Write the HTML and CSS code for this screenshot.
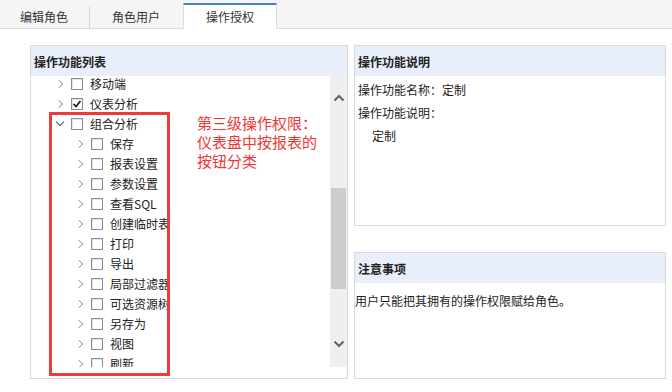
FILE: index.html
```html
<!DOCTYPE html>
<html lang="zh-CN">
  <head>
    <meta charset="UTF-8" />
    <title>操作授权</title>
    <link rel="stylesheet" href="styles.css">
  </head>
  <body>
    <div class="tabs">
      <div class="tab">编辑角色</div>
      <div class="tab">角色用户</div>
      <div class="tab active">操作授权</div>
    </div>

    <div class="main">
      <div class="panel func-panel">
        <div class="panel-head">操作功能列表</div>
        <div class="tree-box">
          <ul class="tree">
            <li class="row"><span class="arrow"></span><span class="cb"></span><span class="label">移动端</span></li>
            <li class="row"><span class="arrow"></span><span class="cb checked"><svg width="10" height="10" viewBox="0 0 10 10"><polyline points="1.5,5 4,7.5 8.5,2" fill="none" stroke="#111" stroke-width="1.6"/></svg></span><span class="label">仪表分析</span></li>
            <li class="row"><span class="arrow open"></span><span class="cb"></span><span class="label">组合分析</span></li>
            <li class="row sub"><span class="arrow"></span><span class="cb"></span><span class="label">保存</span></li>
            <li class="row sub"><span class="arrow"></span><span class="cb"></span><span class="label">报表设置</span></li>
            <li class="row sub"><span class="arrow"></span><span class="cb"></span><span class="label">参数设置</span></li>
            <li class="row sub"><span class="arrow"></span><span class="cb"></span><span class="label">查看SQL</span></li>
            <li class="row sub"><span class="arrow"></span><span class="cb"></span><span class="label">创建临时表</span></li>
            <li class="row sub"><span class="arrow"></span><span class="cb"></span><span class="label">打印</span></li>
            <li class="row sub"><span class="arrow"></span><span class="cb"></span><span class="label">导出</span></li>
            <li class="row sub"><span class="arrow"></span><span class="cb"></span><span class="label">局部过滤器</span></li>
            <li class="row sub"><span class="arrow"></span><span class="cb"></span><span class="label">可选资源树</span></li>
            <li class="row sub"><span class="arrow"></span><span class="cb"></span><span class="label">另存为</span></li>
            <li class="row sub"><span class="arrow"></span><span class="cb"></span><span class="label">视图</span></li>
            <li class="row sub"><span class="arrow"></span><span class="cb"></span><span class="label">刷新</span></li>
          </ul>
          <div class="scrollbar">
            <div class="sb-btn up">
              <svg width="12" height="8" viewBox="0 0 12 8"><polyline points="1.5,6.5 6,2 10.5,6.5" fill="none" stroke="#666" stroke-width="2.2"/></svg>
            </div>
            <div class="sb-gap top"></div>
            <div class="sb-thumb"></div>
            <div class="sb-gap bottom"></div>
            <div class="sb-btn down">
              <svg width="12" height="8" viewBox="0 0 12 8"><polyline points="1.5,1.5 6,6 10.5,1.5" fill="none" stroke="#666" stroke-width="2.2"/></svg>
            </div>
          </div>
        </div>
        <div class="mark-box"></div>
        <div class="mark-note">第三级操作权限：<br />仪表盘中按报表的<br />按钮分类</div>
      </div>

      <div class="side">
        <div class="panel info-panel">
          <div class="panel-head">操作功能说明</div>
          <div class="info-body">
            <div>操作功能名称：定制</div>
            <div>操作功能说明：</div>
            <div class="indent">定制</div>
          </div>
        </div>
        <div class="panel tips-panel">
          <div class="panel-head">注意事项</div>
          <div class="tips-body">用户只能把其拥有的操作权限赋给角色。</div>
        </div>
      </div>
    </div>
  </body>
</html>
```

FILE: styles.css
```css
body {
  margin: 0;
  font-family: "Noto Sans CJK SC", "Liberation Sans", sans-serif;
  font-size: 12px;
  color: #222;
  background: #fff;
}
.tabs {
  display: flex;
  height: 25px;
  padding-top: 3px;
  background-color: #f5f5f5;
  border-bottom: 1px solid #dcdcdc;
}
.tab {
  position: relative;
  width: 92px;
  height: 25px;
  line-height: 27px;
  text-align: center;
  color: #333;
}
.tab:first-child {
  margin-left: -2px;
}
.tab:first-child::after {
  content: "";
  position: absolute;
  right: 0;
  top: 3px;
  bottom: 0;
  width: 1px;
  background: #d4d4d4;
}
.tab.active {
  height: 24px;
  line-height: 24px;
  margin-left: 1px;
  background: #fff;
  border-top: 2px solid #4a80c2;
  border-left: 1px solid #dcdcdc;
  border-right: 1px solid #dcdcdc;
  margin-bottom: -1px;
}
.main {
  display: flex;
  padding: 16px 0 0 30px;
}
.panel {
  border: 1px solid #d9d9d9;
  box-sizing: border-box;
}
.panel-head {
  height: 30px;
  line-height: 31px;
  padding-left: 3px;
  background-color: #e8effb;
  font-weight: bold;
}
.func-panel {
  position: relative;
  width: 318px;
  height: 334px;
}
.tree-box {
  display: flex;
  height: 291px;
}
.tree {
  flex: 1;
  margin: 0;
  padding: 0;
  list-style: none;
  overflow: hidden;
}
.row {
  display: flex;
  align-items: center;
  height: 20px;
  padding-left: 23px;
}
.row:first-child {
  margin-top: -2px;
}
.row.sub {
  padding-left: 43px;
}
.arrow {
  position: relative;
  width: 12px;
  height: 20px;
}
.arrow::before {
  content: "";
  position: absolute;
  left: 2px;
  top: 7px;
  width: 5px;
  height: 5px;
  border-right: 1.5px solid #a8a8a8;
  border-bottom: 1.5px solid #a8a8a8;
  transform: rotate(-45deg);
}
.arrow.open::before {
  left: 3px;
  top: 5px;
  border-color: #555;
  transform: rotate(45deg);
}
.cb {
  display: flex;
  align-items: center;
  justify-content: center;
  width: 12px;
  height: 12px;
  margin-left: 5px;
  box-sizing: border-box;
  border: 1px solid #8c8c8c;
  background: #fff;
  box-shadow: inset 1px 1px 0 #e4e4e4;
}
.label {
  margin-left: 7px;
  max-width: 58px;
  overflow: hidden;
  white-space: nowrap;
  line-height: 20px;
}
.scrollbar {
  display: flex;
  flex-direction: column;
  width: 17px;
  background-color: #efefef;
}
.sb-btn {
  display: flex;
  align-items: center;
  justify-content: center;
}
.sb-btn.up {
  height: 44px;
}
.sb-btn.down {
  height: 46px;
}
.sb-gap.top {
  height: 68px;
}
.sb-gap.bottom {
  height: 32px;
}
.sb-thumb {
  height: 101px;
  margin: 0 1px;
  background-color: #cdcdcd;
}
.mark-box {
  position: absolute;
  left: 18px;
  top: 66px;
  width: 121px;
  height: 264px;
  box-sizing: border-box;
  border: 3px solid #ef3a3a;
}
.mark-note {
  position: absolute;
  left: 166px;
  top: 67px;
  font-size: 15px;
  line-height: 19px;
  color: #f03535;
}
.side {
  display: flex;
  flex-direction: column;
  width: 312px;
  margin-left: 6px;
}
.info-panel {
  height: 181px;
}
.info-body {
  padding: 2px 3px;
  line-height: 23px;
}
.info-body .indent {
  padding-left: 14px;
}
.tips-panel {
  height: 127px;
  margin-top: 26px;
}
.tips-body {
  padding-top: 8px;
  line-height: 20px;
}
```
